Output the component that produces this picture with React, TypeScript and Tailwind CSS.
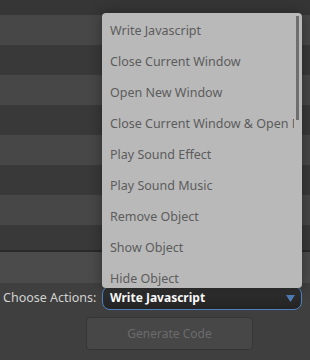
import { useState } from "react";

const actions = [
  "Write Javascript",
  "Close Current Window",
  "Open New Window",
  "Close Current Window & Open New Window",
  "Play Sound Effect",
  "Play Sound Music",
  "Remove Object",
  "Show Object",
  "Hide Object",
];

const rows = [
  "bg-[#474747]",
  "bg-[#393939]",
  "bg-[#474747]",
  "bg-[#393939]",
  "bg-[#474747]",
  "bg-[#393939]",
  "bg-[#474747]",
];

export default function App() {
  const [selected] = useState(actions[0]);

  return (
    <div className="relative w-[310px] h-[360px] overflow-hidden bg-[#3f3f3f] font-['Noto_Sans',sans-serif]">
      <div className="h-[15px] bg-[#363636]" />
      {rows.map((c, i) => (
        <div key={i} className={`h-[30px] ${c}`} />
      ))}
      <div className="h-[25px] bg-[#393939]" />
      <div className="h-[2px] bg-[#2a2a2a]" />
      <div className="h-[31px] bg-[#4b4b4b]" />

      <div className="flex items-center h-[24px] mt-[3px] pl-[3px]">
        <span className="w-[99px] text-[12.5px] text-[#d2d2d2]">Choose Actions:</span>
        <div className="relative flex items-center w-[200px] h-[24px] rounded-[8px] border border-[#4d82c4] bg-gradient-to-b from-[#333] to-[#232323] pl-[7px]">
          <span className="text-[12px] font-bold text-white">{selected}</span>
          <svg className="absolute right-[6px] top-[8px]" width="9" height="7" viewBox="0 0 9 7">
            <path d="M0 0 H9 L4.5 7 Z" fill="#4f7fb8" />
          </svg>
        </div>
      </div>

      <div className="flex mt-[7px] ml-[86px]">
        <button className="w-[167px] h-[33px] rounded-[4px] border border-[#353535] bg-[#474747] text-[12px] text-[#6b6b6b]">
          Generate Code
        </button>
      </div>

      <div className="absolute left-[102px] top-[13px] w-[200px] h-[275px] rounded-[4px] bg-[#b9b9b9] shadow-[0_0_14px_rgba(0,0,0,0.35)] overflow-hidden">
        <div className="absolute right-[3px] top-[3px] w-[3px] h-[104px] bg-[#6e6e6e]" />
        <div className="flex flex-col pt-[3px] pr-[8px]">
          {actions.map((a) => (
            <div
              key={a}
              className="h-[31px] flex items-center pl-[8px] text-[12.5px] text-[#5c5c5c] whitespace-nowrap overflow-hidden"
            >
              {a}
            </div>
          ))}
        </div>
      </div>
    </div>
  );
}
